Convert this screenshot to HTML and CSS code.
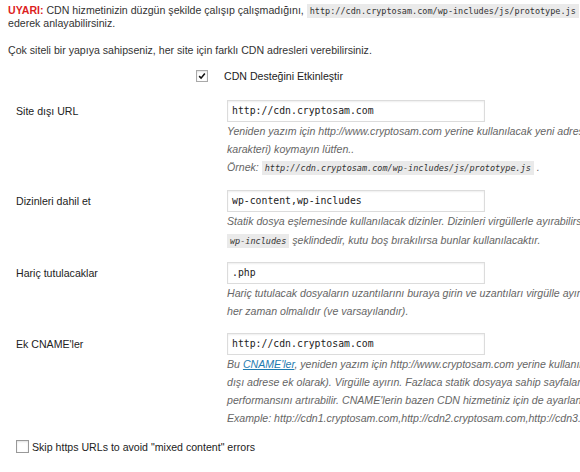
FILE: index.html
```html
<!DOCTYPE html>
<html lang="tr">
<head>
<meta charset="utf-8">
<title>CDN</title>
<link rel="stylesheet" href="styles.css">
</head>
<body>
<div class="page">
  <p class="notice"><strong class="warn">UYARI:</strong> CDN hizmetinizin düzgün şekilde çalışıp çalışmadığını, <code>http://cdn.cryptosam.com/wp-includes/js/prototype.js</code> adresini ziyaret<br>ederek anlayabilirsiniz.</p>
  <p class="intro">Çok siteli bir yapıya sahipseniz, her site için farklı CDN adresleri verebilirsiniz.</p>

  <div class="check-row">
    <span class="cb checked"><svg viewBox="0 0 12 12" width="12" height="12"><path d="M2.6 6.2 L4.9 8.6 L9.4 2.9" fill="none" stroke="#111" stroke-width="1.9"/></svg></span>
    <span class="check-label">CDN Desteğini Etkinleştir</span>
  </div>

  <div class="form">
    <div class="row">
      <div class="label">Site dışı URL</div>
      <div class="field">
        <div class="input">http://cdn.cryptosam.com</div>
        <p class="desc">Yeniden yazım için http://www.cryptosam.com yerine kullanılacak yeni adresi girin, sonuna (/<br>karakteri) koymayın lütfen..<br>Örnek: <code>http://cdn.cryptosam.com/wp-includes/js/prototype.js</code> .</p>
      </div>
    </div>
    <div class="row">
      <div class="label">Dizinleri dahil et</div>
      <div class="field">
        <div class="input">wp-content,wp-includes</div>
        <p class="desc">Statik dosya eşlemesinde kullanılacak dizinler. Dizinleri virgüllerle ayırabilirsiniz. Varsayılan <code>wp-content</code>,<br><code>wp-includes</code> şeklindedir, kutu boş bırakılırsa bunlar kullanılacaktır.</p>
      </div>
    </div>
    <div class="row">
      <div class="label">Hariç tutulacaklar</div>
      <div class="field">
        <div class="input">.php</div>
        <p class="desc">Hariç tutulacak dosyaların uzantılarını buraya girin ve uzantıları virgülle ayırın. PHP dosyaları<br>her zaman olmalıdır (ve varsayılandır).</p>
      </div>
    </div>
    <div class="row">
      <div class="label">Ek CNAME'ler</div>
      <div class="field">
        <div class="input">http://cdn.cryptosam.com</div>
        <p class="desc">Bu <a href="#">CNAME'ler</a>, yeniden yazım için http://www.cryptosam.com yerine kullanılacak (site<br>dışı adrese ek olarak). Virgülle ayırın. Fazlaca statik dosyaya sahip sayfaların<br>performansını artırabilir. CNAME'lerin bazen CDN hizmetiniz için de ayarlanması gerekir.<br>Example: http://cdn1.cryptosam.com,http://cdn2.cryptosam.com,http://cdn3.cryptosam.com</p>
      </div>
    </div>
  </div>

  <div class="skip-row">
    <span class="cb"></span>
    <span class="check-label">Skip https URLs to avoid "mixed content" errors</span>
  </div>
</div>
</body>
</html>
```
FILE: styles.css
```css
html, body {
  margin: 0;
  padding: 0;
  background: #fff;
  overflow: hidden;
}
body {
  width: 580px;
  height: 472px;
  font-family: "Liberation Sans", Arial, sans-serif;
  font-size: 10.6px;
  color: #333;
}
.page {
  padding: 4px 8px 0 8px;
  white-space: nowrap;
}
p { margin: 0; }
code {
  font-family: "DejaVu Sans Mono", monospace;
  font-size: 8.5px;
  background: #eaeaea;
  padding: 2px 3px;
  color: #333;
}
.notice {
  line-height: 12px;
}
.warn {
  color: #dd1f1f;
}
.intro {
  margin-top: 14px;
  line-height: 14px;
}
.check-row {
  display: flex;
  align-items: center;
  padding-left: 188px;
  margin-top: 11px;
  height: 16px;
}
.cb {
  display: inline-flex;
  align-items: center;
  justify-content: center;
  box-sizing: border-box;
  width: 12px;
  height: 12px;
  border: 1px solid #a9a9a9;
  background: #fff;
  box-shadow: inset 0 1px 2px rgba(0,0,0,0.12);
}
.cb svg { display: block; width: 10px; height: 10px; }
.check-row .check-label {
  margin-left: 16px;
  color: #222;
}
.form {
  margin-top: 16px;
  display: flex;
  flex-direction: column;
  gap: 12.5px;
}
.row {
  display: grid;
  grid-template-columns: 219px 1fr;
}
.label {
  padding-left: 8px;
  padding-top: 4px;
  color: #222;
  line-height: 14px;
}
.input {
  box-sizing: border-box;
  width: 258px;
  height: 22px;
  border: 1px solid #dcdcdc;
  box-shadow: inset 0 1px 2px rgba(0,0,0,0.07);
  font-family: "DejaVu Sans Mono", monospace;
  font-size: 9.8px;
  line-height: 20px;
  padding-left: 4px;
  color: #222;
}
.desc {
  font-style: italic;
  color: #666;
  line-height: 18px;
}
.desc a {
  color: #1e7bb0;
}
.skip-row {
  display: flex;
  align-items: center;
  margin-top: 13px;
  padding-left: 8px;
  height: 14px;
}
.skip-row .cb {
  width: 13px;
  height: 13px;
  border-color: #999;
}
.skip-row .check-label {
  margin-left: 3px;
  color: #222;
}
```
